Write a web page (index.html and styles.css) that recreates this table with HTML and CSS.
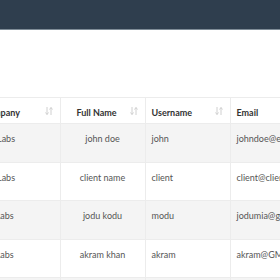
FILE: index.html
```html
<!DOCTYPE html>
<html lang="en">
<head>
    <meta charset="UTF-8">
    <meta name="viewport" content="width=device-width, initial-scale=1.0">
    <title>Clients</title>
    <link rel="stylesheet" href="styles.css">
</head>
<body>
    <header class="topbar"></header>

    <div class="content">
        <div class="table-wrap">
            <table class="data-table">
                <colgroup>
                    <col class="col-company">
                    <col class="col-name">
                    <col class="col-user">
                    <col class="col-email">
                </colgroup>
                <thead>
                    <tr>
                        <th>Company<svg class="sort" viewBox="0 0 8 10"><path d="M2 1v7.5M0.5 6.5L2 8.5L3.5 6.5M6 9V1.5M4.5 3.5L6 1.5L7.5 3.5"/></svg></th>
                        <th class="center-head">Full Name<svg class="sort" viewBox="0 0 8 10"><path d="M2 1v7.5M0.5 6.5L2 8.5L3.5 6.5M6 9V1.5M4.5 3.5L6 1.5L7.5 3.5"/></svg></th>
                        <th>Username<svg class="sort" viewBox="0 0 8 10"><path d="M2 1v7.5M0.5 6.5L2 8.5L3.5 6.5M6 9V1.5M4.5 3.5L6 1.5L7.5 3.5"/></svg></th>
                        <th>Email<svg class="sort" viewBox="0 0 8 10"><path d="M2 1v7.5M0.5 6.5L2 8.5L3.5 6.5M6 9V1.5M4.5 3.5L6 1.5L7.5 3.5"/></svg></th>
                    </tr>
                </thead>
                <tbody>
                    <tr>
                        <td>NX Labs</td>
                        <td class="center">john doe</td>
                        <td>john</td>
                        <td>johndoe@email.com</td>
                    </tr>
                    <tr>
                        <td>NX Labs</td>
                        <td class="center">client name</td>
                        <td>client</td>
                        <td>client@client.com</td>
                    </tr>
                    <tr>
                        <td>Nx Labs</td>
                        <td class="center">jodu kodu</td>
                        <td>modu</td>
                        <td>jodumia@gmail.com</td>
                    </tr>
                    <tr>
                        <td>Nx Labs</td>
                        <td class="center">akram khan</td>
                        <td>akram</td>
                        <td>akram@GMAIL.COM</td>
                    </tr>
                    <tr>
                        <td>Nx Labs</td>
                        <td class="center">test user</td>
                        <td>test</td>
                        <td>test@test.com</td>
                    </tr>
                </tbody>
            </table>
        </div>
    </div>
</body>
</html>
```

FILE: styles.css
```css
body {
    margin: 0;
    font-family: 'Lato', 'Liberation Sans', sans-serif;
    font-size: 9px;
    color: #555;
    background: #fff;
}

.topbar {
    height: 29px;
    background: #2f3e4e;
    border-bottom: 1px solid #7f8c97;
}

.content {
    padding-top: 67px;
    overflow: hidden;
}

.table-wrap {
    margin-left: -24px;
}

.data-table {
    border-collapse: collapse;
    table-layout: fixed;
    width: 354px;
}

.col-company { width: 84px; }
.col-name { width: 85px; }
.col-user { width: 85px; }
.col-email { width: 100px; }

.data-table th,
.data-table td {
    box-sizing: border-box;
    padding: 0 6px;
    text-align: left;
    border-left: 1px solid #ececec;
    white-space: nowrap;
    overflow: hidden;
}

.data-table th:first-child,
.data-table td:first-child {
    border-left: none;
}

.data-table th {
    position: relative;
    height: 26px;
    padding-top: 3px;
    font-weight: bold;
    color: #333;
    border-top: 1px solid #ececec;
    border-bottom: 1px solid #ececec;
}

.data-table td {
    height: 38.5px;
    vertical-align: top;
    padding-top: 9px;
    border-bottom: 1px solid #ececec;
}

.data-table tbody tr:nth-child(odd) {
    background: #f4f4f4;
}

.data-table th.center-head {
    text-align: center;
    padding-right: 18px;
}

.data-table td.center {
    text-align: center;
}

.sort {
    position: absolute;
    right: 7px;
    top: 8px;
    width: 8px;
    height: 10px;
    fill: none;
    stroke: #d0d0d0;
    stroke-width: 1;
}
```
